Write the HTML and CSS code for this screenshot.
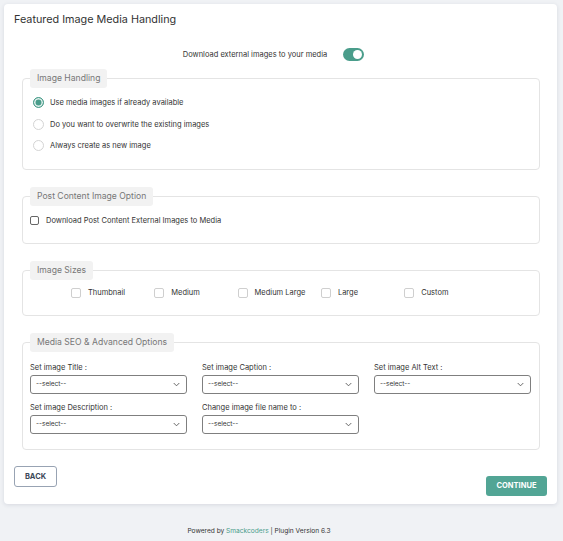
FILE: index.html
```html
<!DOCTYPE html>
<html lang="en">
<head>
<meta charset="utf-8">
<title>Featured Image Media Handling</title>
<link rel="stylesheet" href="styles.css">
</head>
<body>
<div class="card">
  <h1 class="card-title">Featured Image Media Handling</h1>

  <div class="toggle-row">
    <span class="toggle-label">Download external images to your media</span>
    <span class="toggle"><span class="knob"></span></span>
  </div>

  <fieldset class="group group-handling">
    <legend>Image Handling</legend>
    <label class="radio-row"><span class="radio checked"></span>Use media images if already available</label>
    <label class="radio-row"><span class="radio"></span>Do you want to overwrite the existing images</label>
    <label class="radio-row"><span class="radio"></span>Always create as new image</label>
  </fieldset>

  <fieldset class="group group-post">
    <legend>Post Content Image Option</legend>
    <label class="check-row"><span class="check dark"></span>Download Post Content External Images to Media</label>
  </fieldset>

  <fieldset class="group group-sizes">
    <legend>Image Sizes</legend>
    <div class="sizes">
      <label class="size-item"><span class="check light"></span>Thumbnail</label>
      <label class="size-item"><span class="check light"></span>Medium</label>
      <label class="size-item"><span class="check light"></span>Medium Large</label>
      <label class="size-item"><span class="check light"></span>Large</label>
      <label class="size-item"><span class="check light"></span>Custom</label>
    </div>
  </fieldset>

  <fieldset class="group group-seo">
    <legend>Media SEO &amp; Advanced Options</legend>
    <div class="seo-grid">
      <div class="field">
        <div class="field-label">Set image Title :</div>
        <div class="select"><span>--select--</span><svg class="chev" viewBox="0 0 8 5" width="7" height="5"><path d="M0.8 0.8 L4 4 L7.2 0.8" fill="none" stroke="#555" stroke-width="1"/></svg></div>
      </div>
      <div class="field">
        <div class="field-label">Set image Caption :</div>
        <div class="select"><span>--select--</span><svg class="chev" viewBox="0 0 8 5" width="7" height="5"><path d="M0.8 0.8 L4 4 L7.2 0.8" fill="none" stroke="#555" stroke-width="1"/></svg></div>
      </div>
      <div class="field">
        <div class="field-label">Set image Alt Text :</div>
        <div class="select"><span>--select--</span><svg class="chev" viewBox="0 0 8 5" width="7" height="5"><path d="M0.8 0.8 L4 4 L7.2 0.8" fill="none" stroke="#555" stroke-width="1"/></svg></div>
      </div>
      <div class="field">
        <div class="field-label">Set image Description :</div>
        <div class="select"><span>--select--</span><svg class="chev" viewBox="0 0 8 5" width="7" height="5"><path d="M0.8 0.8 L4 4 L7.2 0.8" fill="none" stroke="#555" stroke-width="1"/></svg></div>
      </div>
      <div class="field">
        <div class="field-label">Change image file name to :</div>
        <div class="select"><span>--select--</span><svg class="chev" viewBox="0 0 8 5" width="7" height="5"><path d="M0.8 0.8 L4 4 L7.2 0.8" fill="none" stroke="#555" stroke-width="1"/></svg></div>
      </div>
    </div>
  </fieldset>

  <div class="actions">
    <button class="btn btn-back">BACK</button>
    <button class="btn btn-continue">CONTINUE</button>
  </div>
</div>

<div class="footer">Powered by <span class="brand">Smackcoders</span> | Plugin Version 6.3</div>
</body>
</html>
```

FILE: styles.css
```css
* { box-sizing: border-box; }

html, body {
  margin: 0;
  background: #f0f2f5;
}

body {
  padding: 4px 6px 0 4px;
  font-family: "Inter", "Open Sans", sans-serif;
  color: #333;
  font-size: 7.5px;
}

.card {
  background: #fff;
  border-radius: 4px;
  box-shadow: 0 1px 4px rgba(30, 40, 70, 0.12);
  height: 500px;
  padding: 9px 0 0 0;
  display: flex;
  flex-direction: column;
}

.card-title {
  margin: 0 0 0 10px;
  font-size: 10.8px;
  font-weight: 400;
  line-height: 14px;
  color: #333;
}

.toggle-row {
  display: flex;
  align-items: center;
  justify-content: center;
  gap: 16px;
  margin-top: 20px;
  padding-right: 14px;
  height: 14px;
}

.toggle-label {
  font-size: 7.5px;
  color: #333;
}

.toggle {
  width: 21px;
  height: 13px;
  border-radius: 7px;
  background: #4a9d8b;
  display: flex;
  align-items: center;
  justify-content: flex-end;
  padding-right: 2px;
}

.knob {
  width: 9px;
  height: 9px;
  border-radius: 50%;
  background: #fff;
}

.group {
  margin: 0 17px 0 18px;
  border: 1px solid #e4e4e4;
  border-radius: 4px;
  padding: 0 7px 12px 7px;
  min-width: 0;
}

.group legend {
  background: #f2f2f2;
  border-radius: 3px;
  padding: 0 7px;
  height: 19px;
  line-height: 19px;
  font-size: 8.6px;
  color: #777;
}

.group-handling { margin-top: 8px; padding-top: 4px; }
.group-post { margin-top: 17px; padding-top: 5px; }
.group-sizes { margin-top: 17px; padding-top: 3px; }
.group-seo { margin-top: 17px; padding-top: 10px; padding-bottom: 15px; }

.radio-row {
  display: flex;
  align-items: center;
  height: 21.5px;
  padding-left: 3px;
  gap: 6px;
}

.radio {
  width: 11px;
  height: 11px;
  border-radius: 50%;
  border: 1px solid #d4d4d4;
  background: #fff;
  flex: none;
}

.radio.checked {
  border-color: #4a9d8b;
  background: #4a9d8b;
  box-shadow: inset 0 0 0 1.5px #e4f1ee;
}

.check-row {
  display: flex;
  align-items: center;
  height: 20px;
  gap: 7px;
}

.check {
  width: 9px;
  height: 9px;
  border-radius: 2px;
  flex: none;
  background: #fff;
}

.check.dark { border: 1px solid #666; }
.check.light { border: 1px solid #cfcfcf; width: 10px; height: 10px; }

.sizes {
  display: flex;
  padding-left: 41px;
  height: 20px;
  align-items: center;
}

.size-item {
  width: 83.3px;
  display: flex;
  align-items: center;
  gap: 7px;
}

.seo-grid {
  display: grid;
  grid-template-columns: repeat(3, 157px);
  column-gap: 15px;
  row-gap: 8px;
}

.field-label {
  line-height: 12px;
  margin-bottom: 1px;
  color: #333;
}

.select {
  height: 19px;
  border: 1px solid #7f7f7f;
  border-radius: 3px;
  display: flex;
  align-items: center;
  justify-content: space-between;
  padding: 0 6px 0 5px;
  font-size: 6.5px;
  color: #333;
}

.chev { flex: none; }

.actions {
  display: flex;
  justify-content: space-between;
  align-items: flex-start;
  margin: 16px 10px 0 10px;
}

.btn {
  font-family: "Inter", "Open Sans", sans-serif;
  font-weight: 700;
  font-size: 7.5px;
  border-radius: 3px;
  cursor: pointer;
}

.btn-back {
  width: 43px;
  height: 21px;
  background: #fff;
  border: 1px solid #98a3b3;
  color: #3b4758;
}

.btn-continue {
  width: 61px;
  height: 20px;
  margin-top: 10px;
  background: #52a595;
  border: none;
  color: #fff;
}

.footer {
  text-align: center;
  font-size: 6.6px;
  color: #333;
  margin-top: 23px;
  padding-right: 43px;
}

.brand { color: #4a9d8b; }
```
